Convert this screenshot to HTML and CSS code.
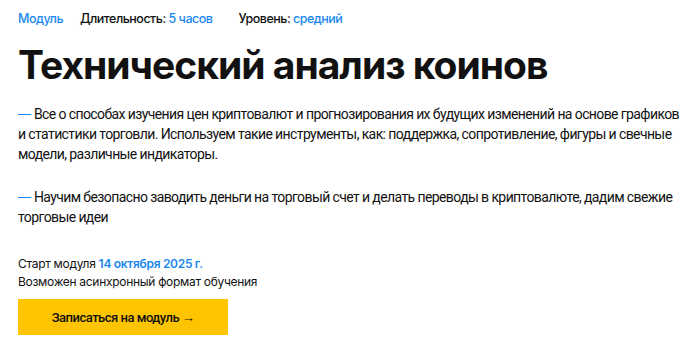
FILE: index.html
```html
<!DOCTYPE html>
<html lang="ru">
<head>
    <meta charset="UTF-8">
    <meta name="viewport" content="width=device-width, initial-scale=1.0">
    <title>Технический анализ коинов</title>
    <link rel="stylesheet" href="styles.css">
</head>
<body>
    <div class="module">
        <div class="meta">
            <span class="meta-item accent">Модуль</span>
            <span class="meta-item">Длительность: <span class="accent">5 часов</span></span>
            <span class="meta-item">Уровень: <span class="accent">средний</span></span>
        </div>
        <h1>Технический анализ коинов</h1>
        <p class="desc"><span class="dash">—</span> <span>Все о способах изучения цен криптовалют и прогнозирования их будущих изменений на основе графиков и статистики торговли. Используем такие инструменты, как: поддержка, сопротивление, фигуры и свечные модели, различные индикаторы.</span></p>
        <p class="desc"><span class="dash">—</span> <span>Научим безопасно заводить деньги на торговый счет и делать переводы в криптовалюте, дадим свежие торговые идеи</span></p>
        <div class="start">
            <p>Старт модуля <b class="accent">14 октября 2025 г.</b></p>
            <p>Возможен асинхронный формат обучения</p>
        </div>
        <button class="enroll">Записаться на модуль →</button>
    </div>
</body>
</html>
```
FILE: styles.css
```css
body {
    margin: 0;
    font-family: Inter, "Noto Sans", sans-serif;
    color: #111;
    background: #fff;
}
.module {
    padding: 11px 18px 0 18px;
}
.accent {
    color: #1a88f0;
}
.meta {
    display: flex;
    gap: 17px;
    font-size: 12.5px;
    font-weight: 500;
    letter-spacing: -0.5px;
    line-height: 16px;
}
.meta-item:nth-child(3) {
    margin-left: 9px;
}
h1 {
    margin: 14px 0 0 0;
    font-size: 39px;
    font-weight: 700;
    letter-spacing: -1px;
    line-height: 48px;
}
.desc {
    margin: 15px 0 0 0;
    font-family: Roboto, sans-serif;
    font-size: 14px;
    line-height: 20px;
    letter-spacing: -0.6px;
}
.desc + .desc {
    margin-top: 23px;
}
.dash {
    font-family: Inter, sans-serif;
    font-size: 13px;
    letter-spacing: 0;
    color: #1a88f0;
}
.start {
    margin-top: 28px;
    font-size: 12px;
    line-height: 18px;
    letter-spacing: -0.3px;
}
.start p {
    margin: 0;
}
.start b {
    font-weight: 600;
}
.enroll {
    display: block;
    margin-top: 8px;
    width: 210px;
    height: 36px;
    border: none;
    background: #ffc400;
    color: #111;
    font-family: Roboto, sans-serif;
    font-size: 13px;
    font-weight: 500;
    letter-spacing: -0.5px;
    cursor: pointer;
}
```
